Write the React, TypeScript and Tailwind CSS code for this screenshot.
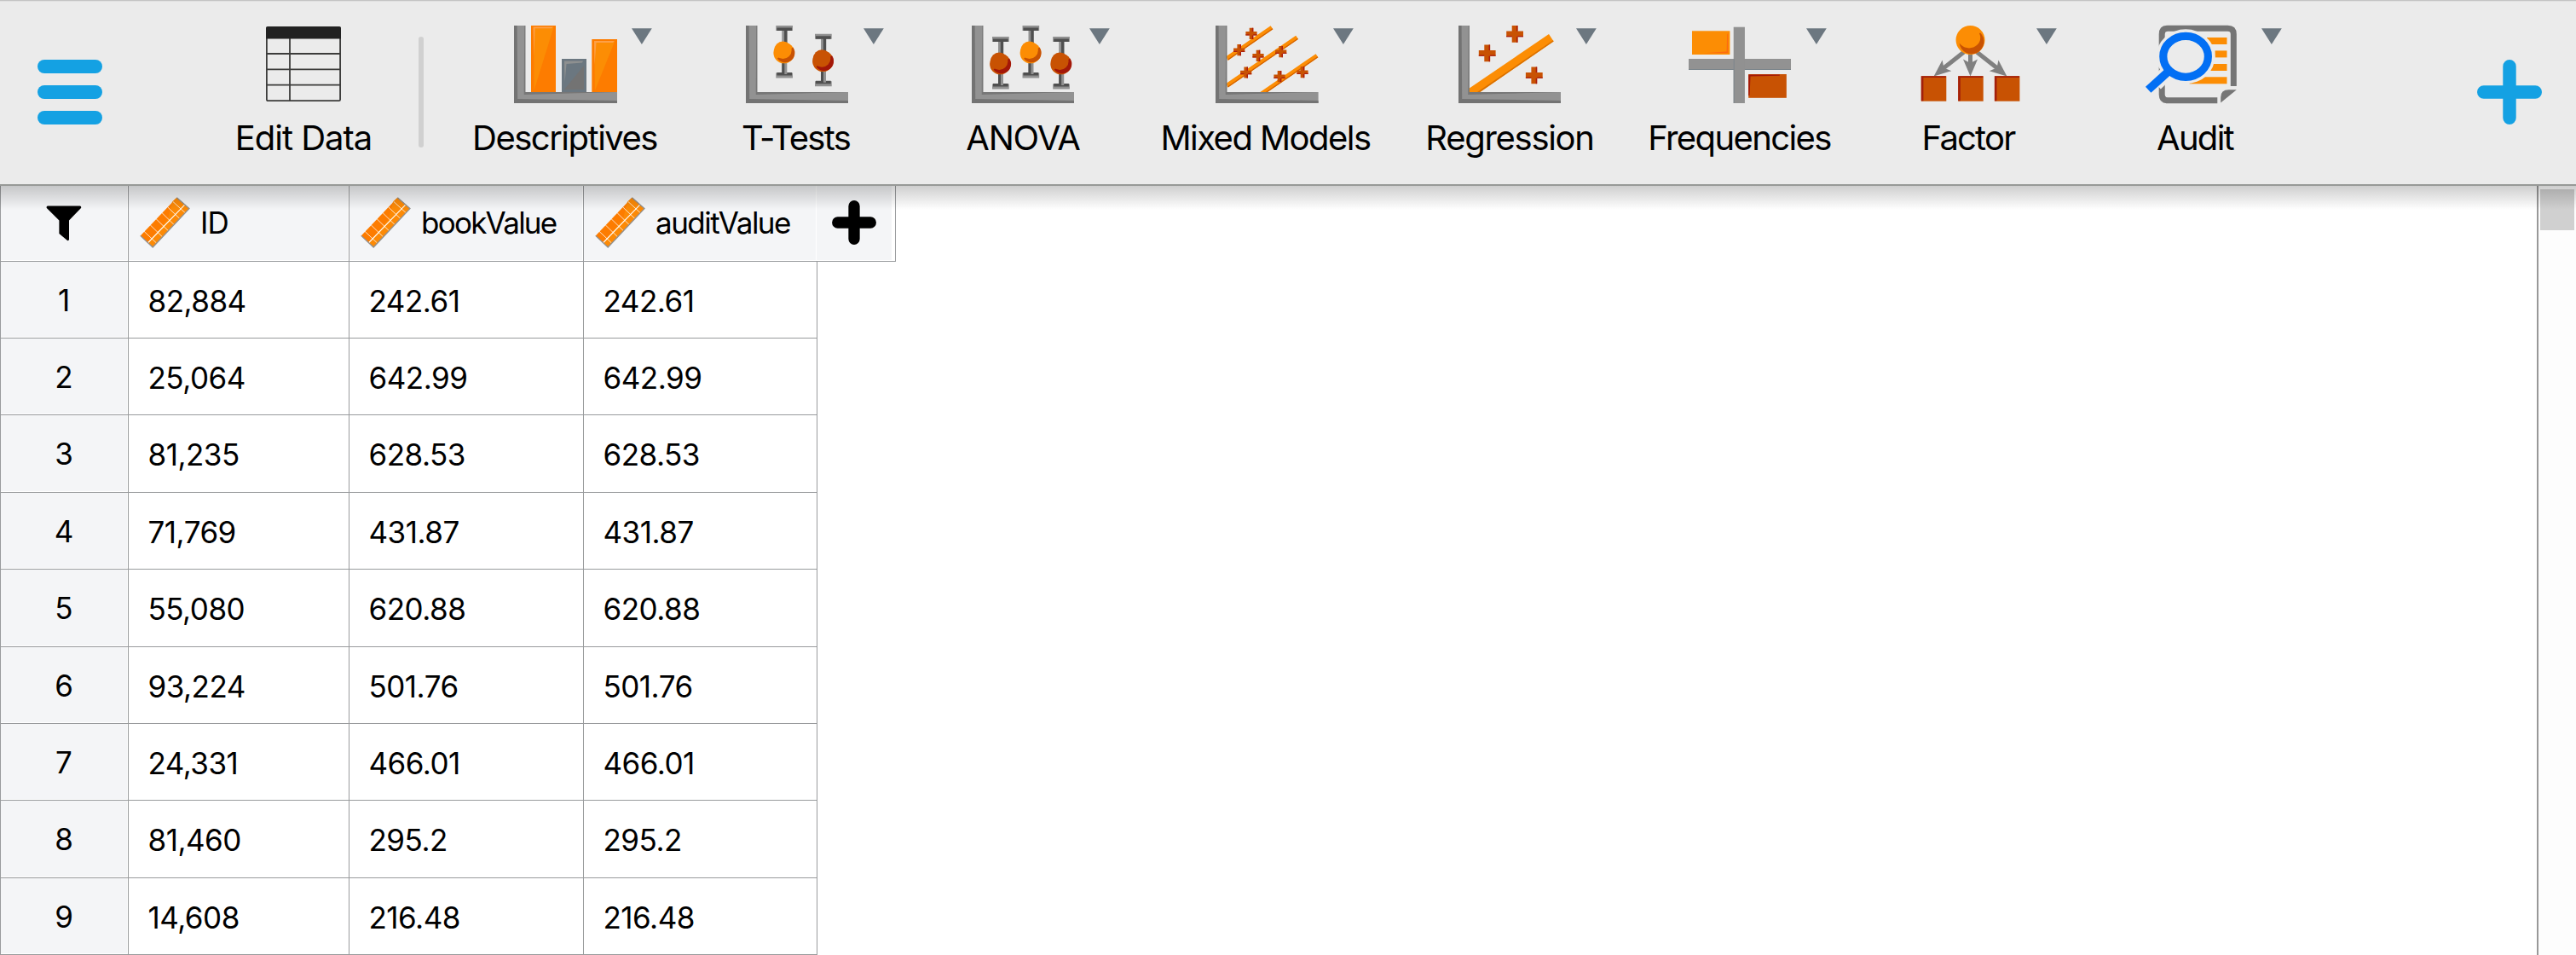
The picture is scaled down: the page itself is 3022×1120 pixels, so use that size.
import type { ReactNode } from 'react';

/* ---------- toolbar icons ---------- */

function Axis({ w = 120, bar = 13.3 }: { w?: number; bar?: number }) {
  return (
    <g>
      <path d={`M0 0H${bar}V78H${w}V91H0Z`} fill="#929292" />
      <path d={`M0 0H3.6L4.2 86L${w} 88V91H0Z`} fill="#737373" />
      <path d={`M${bar - 1} 0H${bar}V78H${w}L${bar - 1.6} 81Z`} fill="#777777" />
    </g>
  );
}

function Svg({ w = 120, children }: { w?: number; children: ReactNode }) {
  return (
    <svg width={w} height="91" viewBox={`0 0 ${w} 91`} className="shrink-0 overflow-visible">
      {children}
    </svg>
  );
}

function DescriptivesIcon() {
  return (
    <Svg>
      <Axis w={121} />
      <g>
        <rect x="20" y="0" width="29" height="78" fill="#fd7c00" />
        <path d="M23 2H46.5L23.5 76Z" fill="#fc8d04" />
        <path d="M22.5 1.5H46L44 3.2H24.6L23.5 36Z" fill="#fda047" />
        <rect x="56" y="39" width="29" height="39" fill="#6b7780" />
        <path d="M82 47V75H59Z" fill="#737373" />
        <path d="M59 41.5H81L80 43.5L61.5 45L59.6 66Z" fill="#8e9090" />
        <rect x="91.3" y="16" width="29.7" height="62" fill="#fd7c00" />
        <path d="M94 19H118L95 76Z" fill="#fc8d04" />
        <path d="M94 18H118L116 20H96.5L94.5 46Z" fill="#fda047" />
      </g>
    </Svg>
  );
}

function ErrorBar({ x, y, light = false }: { x: number; y: number; light?: boolean }) {
  const base = light ? '#fc8d04' : '#c85203';
  const shade = light ? '#c85203' : '#a31708';
  return (
    <g transform={`translate(${x} ${y})`}>
      <path d="M0 0H19.7V6H13V55.5H19.7V61.5H0V55.5H7V6H0Z" fill="#919191" />
      <path d="M1 2.5H18.7V6H13.2V22H9.8V6H1Z" fill="#4f4f4f" />
      <path d="M7 44H10V55H7Z M1 55H10V58.5H1Z M13 55H18.7V58.5H1V57H13Z" fill="#4f4f4f" />
      <circle cx="9.4" cy="32" r="12.3" fill={base} />
      <path d="M20 25.5A11 11 0 0 1 1.6 38.6Z" fill={shade} />
      <circle cx="8.2" cy="28.8" r="10.2" fill={base} />
    </g>
  );
}

function TTestsIcon() {
  return (
    <Svg>
      <Axis />
      <ErrorBar x={35.3} y={0} light />
      <ErrorBar x={81} y={9.7} />
    </Svg>
  );
}

function AnovaIcon() {
  return (
    <Svg>
      <Axis />
      <ErrorBar x={24} y={13} />
      <ErrorBar x={59.5} y={0} light />
      <ErrorBar x={95.2} y={13} />
    </Svg>
  );
}

function Cross({ x, y, r, t }: { x: number; y: number; r: number; t: number }) {
  const h = t / 2;
  return (
    <g transform={`translate(${x} ${y})`}>
      <path d={`M${-h} ${-r}H${h}V${-h}H${r}V${h}H${h}V${r}H${-h}V${h}H${-r}V${-h}H${-h}Z`} fill="#c85203" />
      <path d={`M${h} ${-r}V${-h}H${h - 1.5}V${-r}Z M${h} ${h}V${r}H${h - 1.5}V${h}Z M${-r} ${h}H${-h}V${h - 1.3}H${-r}Z M${r} ${h}H${h}V${h - 1.3}H${r}Z`} fill="#ab1c0e" />
    </g>
  );
}

const trendLines = ['M13.3 38.6L66 2.2', 'M13.3 70.4L95.6 13.8', 'M53 80.5L119 35.2'];
const mixedPoints = [
  [42, 9.3], [27.7, 28.7], [50, 35.3], [76.7, 30.7], [35.7, 55], [75, 59.7], [102, 54.7],
];

function MixedModelsIcon() {
  return (
    <Svg>
      {trendLines.map((d) => (
        <g key={d}>
          <path d={d} stroke="#fc8d04" strokeWidth="5" />
          <path d={d} stroke="#d26000" strokeWidth="1.2" transform="translate(1 1.6)" />
        </g>
      ))}
      {mixedPoints.map(([x, y]) => (
        <Cross key={x} x={x} y={y} r={6.6} t={4.6} />
      ))}
      <Axis w={120.6} />
    </Svg>
  );
}

function RegressionIcon() {
  return (
    <Svg>
      <path d="M12 74L106 10L111.6 18.4L23.8 79H12Z" fill="#fc8d04" />
      <path d="M111 17.2L111.6 18.4L23.8 79H20.5Z" fill="#d97000" />
      <Cross x={66.1} y={9.8} r={9.9} t={6.8} />
      <Cross x={33.7} y={32.3} r={9.9} t={6.8} />
      <Cross x={88.8} y={58.4} r={9.9} t={6.8} />
      <Axis bar={12.8} />
    </Svg>
  );
}

function FrequenciesIcon() {
  return (
    <Svg>
      <rect x="0" y="39" width="120" height="13" fill="#929292" />
      <path d="M0 51H53V52H0Z M66 51H120V52H66Z" fill="#7b858b" />
      <rect x="52.7" y="1.7" width="13.2" height="89.3" fill="#919191" />
      <path d="M52.7 39V91H53.6V39Z" fill="#7b858b" />
      <rect x="4" y="6.3" width="44.4" height="27.7" fill="#fc8d04" />
      <path d="M46.2 9V32.2H18L44.6 30.6L45.2 10Z" fill="#fd6a10" />
      <rect x="70.2" y="57" width="44.6" height="27.8" fill="#c85203" />
      <path d="M70.2 57.6H106.8V58.8L72.5 59.6L71.6 82H70.2Z" fill="#a31708" />
    </Svg>
  );
}

function FactorIcon() {
  return (
    <Svg>
      <g stroke="#808080" strokeWidth="5" fill="none">
        <path d="M53 31L27 51.5" />
        <path d="M60.5 31V48" />
        <path d="M68 31L94 51.5" />
      </g>
      <g fill="#808080">
        <path d="M17.6 59.6L27.6 40.4L29.4 49.4L38.2 53.2Z" />
        <path d="M60.5 59.6L52 39.4L60.5 44L69 39.4Z" />
        <path d="M103.4 59.6L93.4 40.4L91.6 49.4L82.8 53.2Z" />
      </g>
      <circle cx="60.5" cy="17" r="17" fill="#fc8d04" />
      <path d="M72.2 8.5A14.5 14.5 0 1 1 47.6 21Z" fill="#c85203" />
      <ellipse cx="59" cy="14.2" rx="13.2" ry="12.2" fill="#fc8d04" />
      {[2.8, 46.2, 88.9].map((x) => (
        <g key={x} transform={`translate(${x} 59.2)`}>
          <rect width="29.5" height="29.5" fill="#c85203" />
          <path d="M0 0H29V1.8H2.6V29H0Z" fill="#a31f0c" />
        </g>
      ))}
    </Svg>
  );
}

function AuditIcon() {
  return (
    <Svg>
      <path d="M105.3 71V10Q105.3 3.2 98.5 3.2H28Q21.2 3.2 21.2 10V81Q21.2 87.8 28 87.8H86.3" fill="none" stroke="#757575" strokeWidth="7" />
      <path d="M90.2 90.6V84Q90.2 75.2 99.5 75.2H108.8Z" fill="#757575" />
      <g fill="#fc8d04">
        <rect x="74" y="14" width="23.5" height="8" />
        <rect x="83.6" y="29.4" width="13.9" height="8" />
        <rect x="76" y="45" width="21.5" height="8" />
        <rect x="53.6" y="60.3" width="43.9" height="8" />
      </g>
      <ellipse cx="49.1" cy="36.3" rx="34.4" ry="32" fill="#ebebeb" />
      <path d="M32 51L14 68.3" stroke="#ebebeb" strokeWidth="17" />
      <path d="M32 51L5.2 75.3" stroke="#026ff4" strokeWidth="9.6" />
      <ellipse cx="49.1" cy="36.3" rx="26.3" ry="24" fill="#ebebeb" stroke="#026ff4" strokeWidth="9.2" />
    </Svg>
  );
}

/* ---------- toolbar ---------- */

type Module = { label: string; icon: ReactNode; width: string; text: string };

const modules: Module[] = [
  { label: 'Descriptives', icon: <DescriptivesIcon />, width: 'w-[270px]', text: 'tracking-[-1.5px] pr-[1px]' },
  { label: 'T-Tests', icon: <TTestsIcon />, width: 'w-[274px]', text: 'tracking-[-1.75px] pr-[3px]' },
  { label: 'ANOVA', icon: <AnovaIcon />, width: 'w-[256px]', text: 'tracking-[-1.2px]' },
  { label: 'Mixed Models', icon: <MixedModelsIcon />, width: 'w-[316px]', text: 'tracking-[-1.55px] pr-[3px]' },
  { label: 'Regression', icon: <RegressionIcon />, width: 'w-[254px]', text: 'tracking-[-1.3px]' },
  { label: 'Frequencies', icon: <FrequenciesIcon />, width: 'w-[286px]', text: 'tracking-[-1.6px] pr-[1px]' },
  { label: 'Factor', icon: <FactorIcon />, width: 'w-[254px]', text: 'tracking-[-1.8px] pr-[4px]' },
  { label: 'Audit', icon: <AuditIcon />, width: 'w-[274px]', text: 'tracking-[-1.7px]' },
];

function ModuleButton({ label, icon, width, text }: Module) {
  return (
    <button className={`flex shrink-0 flex-col ${width}`}>
      <span className="grid w-full grid-cols-[1fr_120px_1fr] items-start">
        <span />
        {icon}
        <svg width="24" height="19" viewBox="0 0 24 19" className="mt-[3px] ml-[17.5px]">
          <path d="M0 0.3H23.8L11.9 19Z" fill="#6c7780" />
        </svg>
      </span>
      <span className={`mt-[17px] w-full text-center text-[40px] leading-[48px] whitespace-nowrap ${text}`}>
        {label}
      </span>
    </button>
  );
}

function EditDataButton() {
  return (
    <button className="flex w-[170px] shrink-0 flex-col items-center">
      <svg width="90" height="91" viewBox="0 0 90 91" fill="none" stroke="#3c3c3b" strokeWidth="1.8">
        <rect x="1.9" y="2" width="86.2" height="86.2" rx="1.5" />
        <path d="M2 33H88M2 51.3H88M2 69.6H88M29 15V88" />
        <path d="M1 3Q1 1.2 3 1.2H87Q89 1.2 89 3V15.5H1Z" fill="#212121" stroke="none" />
      </svg>
      <span className="mt-[17px] text-[40px] leading-[48px] tracking-[-1px] whitespace-nowrap">Edit Data</span>
    </button>
  );
}

function Toolbar() {
  return (
    <header className="flex h-[218px] shrink-0 border-t border-b-2 border-t-[#c4c4c4] border-b-[#979997] bg-[#ebebeb] shadow-[inset_0_1px_0_#e0e0e0]">
      <button className="mt-[69px] ml-[44px] flex h-[76px] w-[76px] shrink-0 flex-col justify-between">
        <span className="h-4 w-full rounded-full bg-[#14a1e3]" />
        <span className="h-4 w-full rounded-full bg-[#14a1e3]" />
        <span className="h-4 w-full rounded-full bg-[#14a1e3]" />
      </button>
      <nav className="ml-[151px] flex flex-1 pt-[29px]">
        <EditDataButton />
        <div className="mt-[13px] mr-[31px] ml-[50px] h-[130px] w-1.5 shrink-0 rounded-full bg-[#d0d0d0]" />
        {modules.map((m) => (
          <ModuleButton key={m.label} {...m} />
        ))}
      </nav>
      <button className="mt-[69px] mr-[40px] h-[76px] w-[76px] shrink-0">
        <svg width="76" height="76" viewBox="0 0 76 76">
          <path d="M38 7.7V68.3M7.7 38H68.3" stroke="#14a1e3" strokeWidth="15.4" strokeLinecap="round" />
        </svg>
      </button>
    </header>
  );
}

/* ---------- data table ---------- */

function RulerIcon() {
  return (
    <svg width="59" height="60" viewBox="0 0 59 60" className="shrink-0">
      <path d="M43.4 0.8L58 13.6L15.2 59L0.7 45.4Z" fill="#fd7c00" />
      <path d="M43.4 0.8L58 13.6L15.2 59L9.6 53.4L33 26L38 5.5Z" fill="#fc8a06" />
      <path d="M9.3 54L53 8.8" stroke="#fff" strokeWidth="1.1" fill="none" />
      <path d="M5 40.3L19.5 54M12.2 32.8L26.5 46.8M19 25.6L33.3 39.6M25.8 18.4L40 32.4M32.4 11.6L46.8 25.4M38.6 5.2L53.2 18.6" stroke="#fff" strokeOpacity="0.85" strokeWidth="0.9" fill="none" />
      <path d="M43.4 0.8L58 13.6L15.2 59L0.7 45.4" fill="none" stroke="#919191" strokeWidth="1.3" />
    </svg>
  );
}

function FunnelIcon() {
  return (
    <svg width="42" height="42" viewBox="0 0 42 42">
      <path d="M2 0.5H39.8Q41.8 1 41 3L27 17.5V40Q26.6 41.6 25 41L15.4 33V17.5L0.8 3Q0 1 2 0.5Z" fill="#000" />
    </svg>
  );
}

const line = 'border-[#999b9d]';
const columnWidths = ['w-[259px]', 'w-[275px]', 'w-[274px]'];

const headers = [
  { name: 'ID', cell: 'w-[259px] border-r', text: 'ml-[12px] tracking-[-1px]' },
  { name: 'bookValue', cell: 'w-[275px] border-r', text: 'ml-[12px] tracking-[-1.75px]' },
  { name: 'auditValue', cell: 'w-[273px]', text: 'ml-[12px] tracking-[-1.5px]' },
];

const rows = [
  { h: 'h-[90px]', values: ['82,884', '242.61', '242.61'] },
  { h: 'h-[90px]', values: ['25,064', '642.99', '642.99'] },
  { h: 'h-[91px]', values: ['81,235', '628.53', '628.53'] },
  { h: 'h-[90px]', values: ['71,769', '431.87', '431.87'] },
  { h: 'h-[91px]', values: ['55,080', '620.88', '620.88'] },
  { h: 'h-[90px]', values: ['93,224', '501.76', '501.76'] },
  { h: 'h-[90px]', values: ['24,331', '466.01', '466.01'] },
  { h: 'h-[91px]', values: ['81,460', '295.2', '295.2'] },
  { h: 'h-[90px]', values: ['14,608', '216.48', '216.48'] },
];

function DataTable() {
  return (
    <div className={`w-[1051px] border-l text-[35px] leading-[40px] ${line}`}>
      <div className={`flex h-[89px] border-b ${line}`}>
        <div className={`flex w-[150px] items-center justify-center border-r bg-[#f4f5f7] pr-[1px] shadow-[inset_-1px_-1px_0_#fff] ${line}`}>
          <FunnelIcon />
        </div>
        {headers.map((h) => (
          <div key={h.name} className={`flex items-center bg-[#f4f5f7] pb-[2px] pl-[13px] shadow-[inset_-1px_-1px_0_#fff] ${h.cell} ${line}`}>
            <RulerIcon />
            <span className={h.text}>{h.name}</span>
          </div>
        ))}
        <div className={`flex flex-1 border-r bg-white pr-1 pb-px ${line}`}>
          <div className="flex flex-1 items-center justify-center bg-[#f4f5f7] pb-px">
            <svg width="52" height="52" viewBox="0 0 52 52">
              <path d="M26 6.7V45.3M6.7 26H45.3" stroke="#000" strokeWidth="13.3" strokeLinecap="round" />
            </svg>
          </div>
        </div>
      </div>
      {rows.map((row, i) => (
        <div key={i} className={`flex w-[958px] border-b ${line} ${row.h}`}>
          <div className={`flex w-[150px] items-center justify-center border-r bg-[#f4f5f7] pr-[1px] shadow-[inset_-1px_-1px_0_#fff] ${line}`}>
            {i + 1}
          </div>
          {row.values.map((v, c) => (
            <div key={c} className={`flex items-center border-r pt-[2px] pl-[22.5px] tracking-[-0.5px] ${line} ${columnWidths[c]}`}>
              {v}
            </div>
          ))}
        </div>
      ))}
    </div>
  );
}

export default function App() {
  return (
    <div className="flex h-[1120px] w-[3022px] flex-col overflow-hidden bg-white font-['Inter',sans-serif] text-black">
      <Toolbar />
      <main className="relative flex flex-1 justify-between">
        <DataTable />
        <div className="w-[46px] border-l-2 border-[#999999] bg-[#fdfdfd] px-0.5 pt-1">
          <div className="h-12 w-10 bg-[#d0d0d0]" />
        </div>
        <div className="pointer-events-none absolute inset-x-0 top-0 h-7 bg-linear-to-b from-black/19 to-transparent" />
      </main>
    </div>
  );
}
